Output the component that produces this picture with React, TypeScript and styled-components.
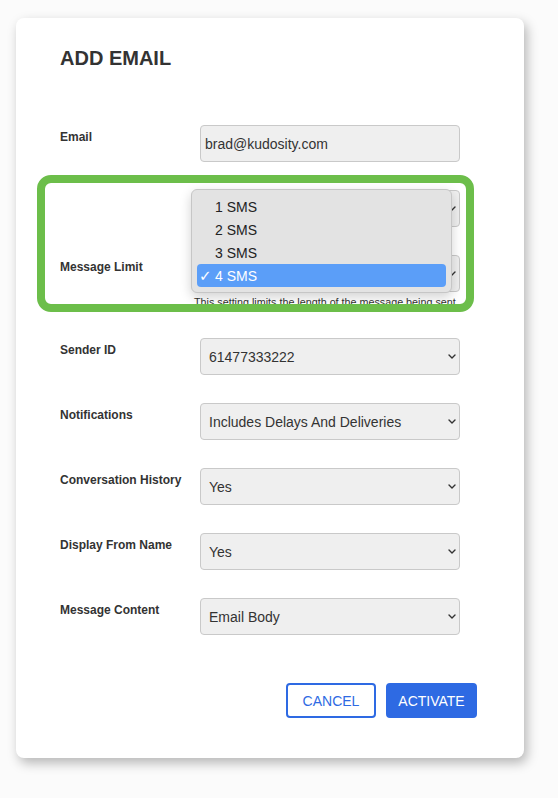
import React from "react";
import styled, { createGlobalStyle } from "styled-components";

const GlobalStyle = createGlobalStyle`
  html, body {
    margin: 0;
    padding: 0;
    background: #fbfbfb;
    font-family: "Liberation Sans", Arial, Helvetica, sans-serif;
    color: #333;
  }
  * { box-sizing: border-box; }
`;

const Page = styled.div`
  width: 558px;
  min-height: 798px;
  padding: 18px 0 0 16px;
`;

const Card = styled.div`
  position: relative;
  width: 508px;
  background: #fff;
  border-radius: 8px;
  box-shadow: 3px 5px 12px rgba(0, 0, 0, 0.28);
  padding: 28px 47px 40px 44px;
`;

const Title = styled.h2`
  margin: 0;
  font-size: 20px;
  line-height: 24px;
  font-weight: 700;
  color: #333;
`;

const Form = styled.div`
  margin-top: 55px;
  display: flex;
  flex-direction: column;
`;

const Row = styled.div<{ $gap?: number }>`
  display: grid;
  grid-template-columns: 140px 260px;
  margin-bottom: ${(p) => (p.$gap ?? 28)}px;
`;

const Label = styled.label`
  padding-top: 5px;
  font-size: 12px;
  line-height: 14px;
  font-weight: 700;
  color: #333;
`;

const TextInput = styled.input`
  width: 260px;
  height: 37px;
  border: 1px solid #c9c9c9;
  border-radius: 4px;
  background: #efefef;
  padding: 0 4px;
  font-family: inherit;
  font-size: 14px;
  color: #333;
  outline: none;
`;

const SelectWrap = styled.div`
  position: relative;
  width: 260px;
  height: 37px;
`;

const Select = styled.select`
  appearance: none;
  -webkit-appearance: none;
  width: 100%;
  height: 37px;
  border: 1px solid #c9c9c9;
  border-radius: 4px;
  background: #efefef;
  padding: 0 24px 0 8px;
  font-family: inherit;
  font-size: 14px;
  color: #333;
  outline: none;
`;

const Chevron = styled.svg`
  position: absolute;
  right: 4px;
  top: 16px;
  width: 8px;
  height: 5px;
  pointer-events: none;
`;

const Block = styled.div`
  position: relative;
  display: flex;
  flex-direction: column;
  margin-bottom: 29px;
`;

const Helper = styled.div`
  margin: 4px 0 0 134px;
  font-size: 10.75px;
  line-height: 13px;
  color: #333;
  white-space: nowrap;
`;

const Popup = styled.div`
  position: absolute;
  left: 131px;
  top: -1px;
  width: 261px;
  background: #e3e3e3;
  border: 1px solid #c6c6c6;
  border-radius: 6px;
  padding: 5px;
  box-shadow: 0 4px 12px rgba(0, 0, 0, 0.18);
  z-index: 2;
`;

const Option = styled.div<{ $selected?: boolean }>`
  position: relative;
  height: 23px;
  line-height: 24px;
  padding-left: 18px;
  font-size: 14px;
  border-radius: 4px;
  color: ${(p) => (p.$selected ? "#fff" : "#222")};
  background: ${(p) => (p.$selected ? "#5b9ef8" : "transparent")};
`;

const Check = styled.span`
  position: absolute;
  left: 2px;
  top: 0;
  font-size: 15px;
  font-family: "DejaVu Sans", sans-serif;
`;

const Highlight = styled.div`
  position: absolute;
  left: 21px;
  top: 157px;
  width: 437px;
  height: 137px;
  border: 8px solid #6cbe4a;
  border-radius: 14px;
  pointer-events: none;
  z-index: 3;
`;

const Actions = styled.div`
  display: flex;
  justify-content: flex-end;
  gap: 10px;
  margin-top: 48px;
`;

const Button = styled.button<{ $primary?: boolean; $w: number }>`
  width: ${(p) => p.$w}px;
  height: 35px;
  border-radius: 4px;
  border: 2px solid #2e6ae3;
  background: ${(p) => (p.$primary ? "#2e6ae3" : "#fff")};
  color: ${(p) => (p.$primary ? "#fff" : "#2e6ae3")};
  font-family: inherit;
  font-size: 14px;
  padding: 0;
  cursor: pointer;
`;

const ChevronIcon = () => (
  <Chevron viewBox="0 0 8 5">
    <path d="M1 1 L4 4 L7 1" fill="none" stroke="#333" strokeWidth="1.4" strokeLinecap="round" strokeLinejoin="round" />
  </Chevron>
);

const SelectField = ({ value, options }: { value: string; options: string[] }) => (
  <SelectWrap>
    <Select defaultValue={value}>
      {options.map((o) => (
        <option key={o}>{o}</option>
      ))}
    </Select>
    <ChevronIcon />
  </SelectWrap>
);

const rows = [
  { label: "Sender ID", value: "61477333222", options: ["61477333222"] },
  { label: "Notifications", value: "Includes Delays And Deliveries", options: ["Includes Delays And Deliveries"] },
  { label: "Conversation History", value: "Yes", options: ["Yes", "No"] },
  { label: "Display From Name", value: "Yes", options: ["Yes", "No"] },
  { label: "Message Content", value: "Email Body", options: ["Email Body"] },
];

const smsOptions = ["1 SMS", "2 SMS", "3 SMS", "4 SMS"];

export default function App() {
  return (
    <>
      <GlobalStyle />
      <Page>
        <Card>
          <Title>ADD EMAIL</Title>
          <Form>
            <Row>
              <Label>Email</Label>
              <TextInput defaultValue="brad@kudosity.com" />
            </Row>
            <Block>
              <Row>
                <Label></Label>
                <SelectField value="" options={[""]} />
              </Row>
              <Row $gap={0}>
                <Label>Message Limit</Label>
                <SelectField value="4 SMS" options={smsOptions} />
              </Row>
              <Helper>This setting limits the length of the message being sent</Helper>
              <Popup>
                {smsOptions.map((o) => (
                  <Option key={o} $selected={o === "4 SMS"}>
                    {o === "4 SMS" && <Check>✓</Check>}
                    {o}
                  </Option>
                ))}
              </Popup>
            </Block>
            {rows.map((r, i) => (
              <Row key={r.label} $gap={i === rows.length - 1 ? 0 : 28}>
                <Label>{r.label}</Label>
                <SelectField value={r.value} options={r.options} />
              </Row>
            ))}
          </Form>
          <Actions>
            <Button $w={90}>CANCEL</Button>
            <Button $w={91} $primary>ACTIVATE</Button>
          </Actions>
          <Highlight />
        </Card>
      </Page>
    </>
  );
}
